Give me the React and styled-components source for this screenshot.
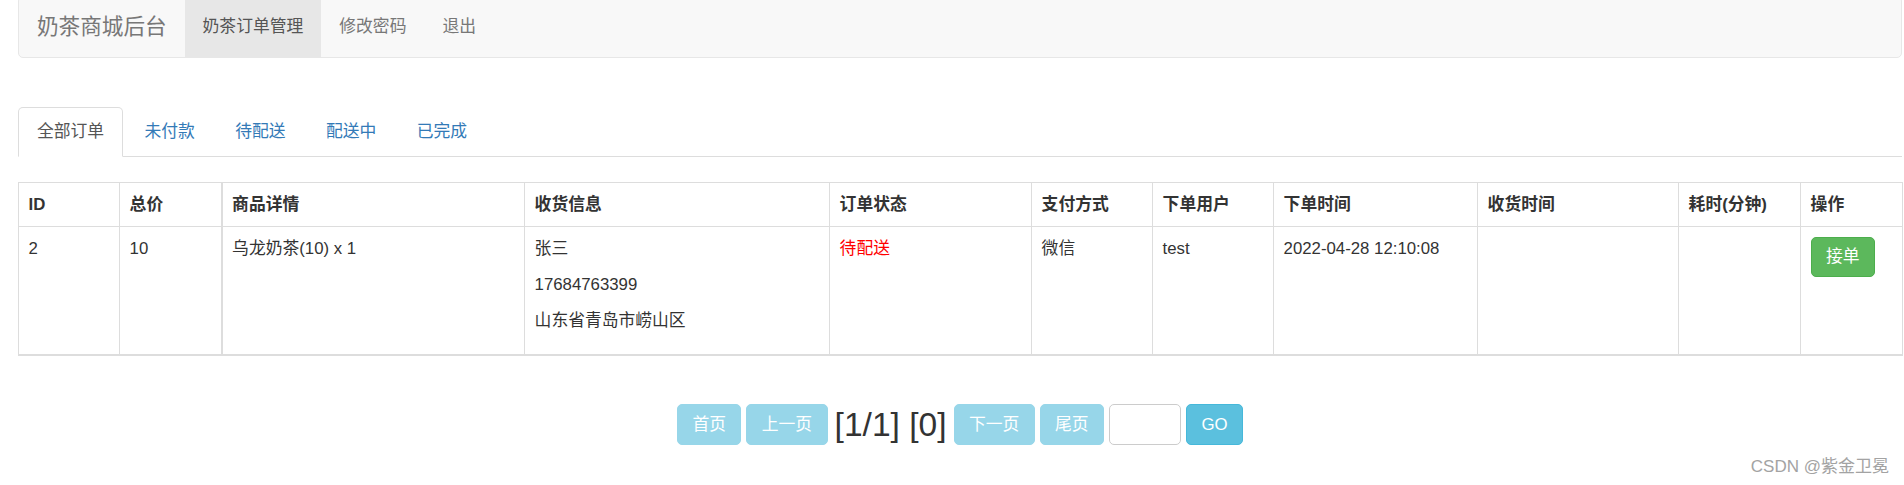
import React from 'react';
import styled, { createGlobalStyle } from 'styled-components';

const GlobalStyle = createGlobalStyle`
html, body {
  margin: 0;
  overflow: hidden;
  background: #fff;
}
body {
  font-family: "Liberation Sans", Arial, "Noto Sans CJK SC", sans-serif;
  font-size: 16.8px;
  line-height: 24px;
  color: #333;
}
`

const Page = styled.div`
padding: 0 2px 0 18px;
`

const Navbar = styled.nav`
margin-top: -4px;
min-height: 60px;
display: flex;
align-items: stretch;
background-color: #f8f8f8;
border: 1px solid #e7e7e7;
border-radius: 5px;
`

const Brand = styled.a`
padding: 18px;
height: 24px;
font-size: 21.6px;
line-height: 24px;
color: #777;
`

const NavLink = styled.a`
padding: 18px;
line-height: 24px;
color: ${p => (p.$active ? '#555' : '#777')};
background-color: ${p => (p.$active ? '#e7e7e7' : 'transparent')};
`

const TabList = styled.ul`
list-style: none;
margin: 49px 0 0;
padding: 0;
display: flex;
border-bottom: 1px solid #ddd;
`

const Tab = styled.li`
margin: 0 2.4px -1px 0;
padding: 12px 18px;
line-height: 24px;
border: 1px solid ${p => (p.$active ? '#ddd' : 'transparent')};
border-bottom-color: transparent;
border-radius: 5px 5px 0 0;
background: ${p => (p.$active ? '#fff' : 'transparent')};
color: ${p => (p.$active ? '#555' : '#337ab7')};
`

const Table = styled.table`
margin-top: 25px;
width: 1884px;
table-layout: fixed;
border-collapse: collapse;
border: 1px solid #ddd;
border-bottom-width: 2px;
`

const Th = styled.th`
padding: 9.6px;
text-align: left;
font-weight: bold;
vertical-align: top;
border: 1px solid #ddd;
&:nth-child(3) { border-left-width: 2px; }
`

const Td = styled.td`
padding: 9.6px;
vertical-align: top;
border: 1px solid #ddd;
color: ${p => p.$color || '#333'};
&:nth-child(3) { border-left-width: 2px; }
`

const Line = styled.p`
margin: 0 0 12px;
`

const TakeButton = styled.button`
font: inherit;
padding: 7.2px 14.4px;
line-height: 24px;
color: #fff;
background-color: #5cb85c;
border: 1px solid #4cae4c;
border-radius: 5px;
`

const Pager = styled.div`
margin-top: 48px;
display: flex;
justify-content: center;
align-items: center;
gap: 5px;
`

const PageButton = styled.button`
font: inherit;
height: 41px;
padding: 0 14.4px;
line-height: 24px;
color: #fff;
background-color: ${p => (p.$on ? '#5bc0de' : '#97d6e9')};
border: 1px solid ${p => (p.$on ? '#46b8da' : '#97d6e9')};
border-radius: 5px;
`

const PageInfo = styled.span`
font-size: 33.6px;
line-height: 41px;
margin: 0 2px;
color: #333;
`

const PageInput = styled.input`
box-sizing: border-box;
width: 72px;
height: 41px;
border: 1px solid #ccc;
border-radius: 5px;
`

const Footer = styled.div`
margin-top: 10px;
padding-right: 13px;
display: flex;
justify-content: flex-end;
font-size: 17px;
color: #a3a3a3;
`

const widths = [101, 102, 303, 305, 202, 121, 121, 204, 201, 122, 102]
const heads = ['ID', '总价', '商品详情', '收货信息', '订单状态', '支付方式', '下单用户', '下单时间', '收货时间', '耗时(分钟)', '操作']
const tabs = ['全部订单', '未付款', '待配送', '配送中', '已完成']

const App = () => {
  return (
    <Page>
      <GlobalStyle />
      <Navbar>
        <Brand>奶茶商城后台</Brand>
        <NavLink $active>奶茶订单管理</NavLink>
        <NavLink>修改密码</NavLink>
        <NavLink>退出</NavLink>
      </Navbar>

      <TabList>
        {tabs.map((t, i) => (
          <Tab key={t} $active={i === 0}>{t}</Tab>
        ))}
      </TabList>

      <Table>
        <colgroup>
          {widths.map((w, i) => <col key={i} style={{ width: w }} />)}
        </colgroup>
        <thead>
          <tr>
            {heads.map(h => <Th key={h}>{h}</Th>)}
          </tr>
        </thead>
        <tbody>
          <tr>
            <Td>2</Td>
            <Td>10</Td>
            <Td>乌龙奶茶(10) x 1</Td>
            <Td>
              <Line>张三</Line>
              <Line>17684763399</Line>
              <Line>山东省青岛市崂山区</Line>
            </Td>
            <Td $color="#f00">待配送</Td>
            <Td>微信</Td>
            <Td>test</Td>
            <Td>2022-04-28 12:10:08</Td>
            <Td></Td>
            <Td></Td>
            <Td><TakeButton>接单</TakeButton></Td>
          </tr>
        </tbody>
      </Table>

      <Pager>
        <PageButton>首页</PageButton>
        <PageButton>上一页</PageButton>
        <PageInfo>[1/1] [0]</PageInfo>
        <PageButton>下一页</PageButton>
        <PageButton>尾页</PageButton>
        <PageInput />
        <PageButton $on>GO</PageButton>
      </Pager>

      <Footer>CSDN @紫金卫冕</Footer>
    </Page>
  )
}

export default App
